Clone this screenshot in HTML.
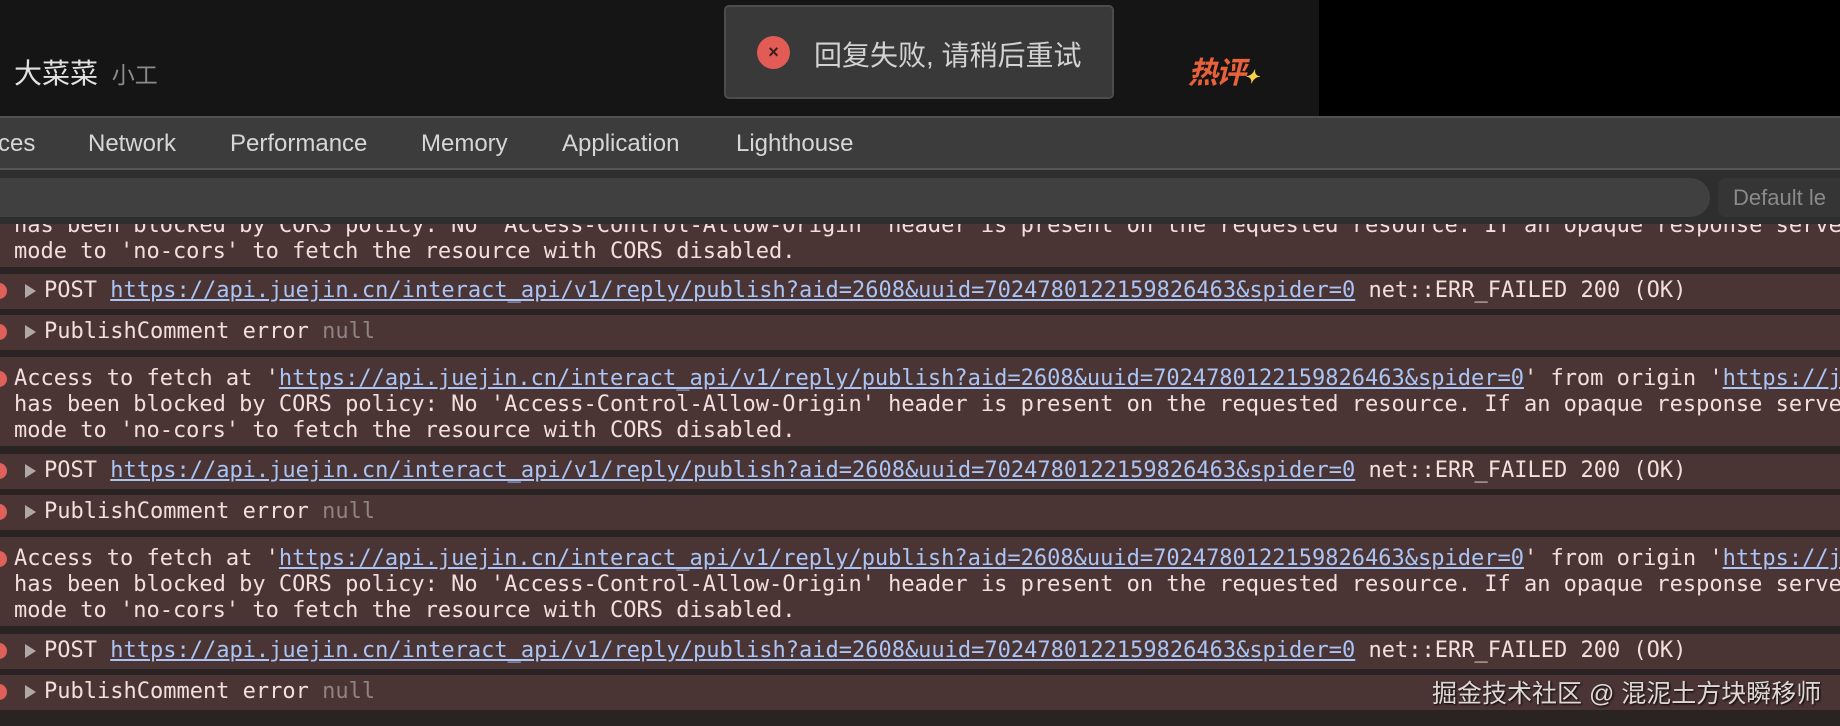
<!DOCTYPE html>
<html><head><meta charset="utf-8"><style>
*{margin:0;padding:0;box-sizing:border-box}
html,body{width:1840px;height:726px;overflow:hidden;background:#292323;position:relative}
.top{position:absolute;left:0;top:0;width:1840px;height:116px;background:#000}
.topd{position:absolute;left:0;top:0;width:1319px;height:116px;background:#151515}
.cn{font-family:"Liberation Sans","Noto Sans CJK SC",sans-serif}
.tabs{position:absolute;left:0;top:116px;width:1840px;height:54px;background:#3c3c3c;border-top:2px solid #505050;border-bottom:2px solid #555}
.tab{position:absolute;top:12px;font:24px "Liberation Sans",sans-serif;color:#d6d6d6}
.filt{position:absolute;left:0;top:170px;width:1840px;height:54px;background:#2e2e2e}
.inp{position:absolute;left:-20px;top:8px;width:1730px;height:39px;background:#404040;border-radius:20px}
.lvl{position:absolute;left:1718px;top:8px;width:140px;height:39px;background:#353535;border-radius:8px;font:22px "Liberation Sans",sans-serif;color:#8a8a8a;padding:7px 0 0 15px}
.con{position:absolute;left:0;top:224px;width:1840px;height:502px;overflow:hidden}
.row{position:absolute;left:0;width:1840px;background:#4a3534;font:22px/26px "DejaVu Sans Mono","Liberation Mono",monospace;color:#f2dfdc;white-space:pre;padding-top:4px;overflow:hidden}
.row.a3{padding-top:9px}
.row a{color:#a9c4f5;text-decoration:underline}
.ic{position:absolute;left:-9px;width:16px;height:16px;border-radius:50%;background:#e0605a}
.ar{display:inline-block;width:0;height:0;border-top:7px solid transparent;border-bottom:7px solid transparent;border-left:11px solid #b0a8a6;margin:0 8px 0 0;vertical-align:-1px}
.n{color:#8e8482}
</style></head><body>
<div class="top"></div><div class="topd"></div>
<div class="cn" style="position:absolute;left:14px;top:52px;font-size:28px;color:#e2e2e2">大菜菜 <span style="font-size:23px;color:#8a8a8a;margin-left:6px">小工</span></div>
<div style="position:absolute;left:724px;top:5px;width:390px;height:94px;background:#393939;border:2px solid #4c4c4c;border-radius:5px"></div>
<div style="position:absolute;left:757px;top:36px;width:33px;height:33px;border-radius:50%;background:#e25b55;color:#3a2020;font:bold 18px 'Liberation Sans',sans-serif;text-align:center;line-height:33px">×</div>
<div class="cn" style="position:absolute;left:814px;top:34px;font-size:28px;color:#d2d2d2">回复失败, 请稍后重试</div>
<div class="cn" style="position:absolute;left:1188px;top:48px;font-size:30px;font-weight:bold;color:#e8613a;font-style:italic;letter-spacing:-2px">热评<span style="color:#f5d04a;font-size:18px">✦</span></div>
<div class="tabs">
<span class="tab" style="left:-2px">ces</span><span class="tab" style="left:88px">Network</span><span class="tab" style="left:230px">Performance</span><span class="tab" style="left:421px">Memory</span><span class="tab" style="left:562px">Application</span><span class="tab" style="left:736px">Lighthouse</span>
</div>
<div class="filt"><div class="inp"></div><div class="lvl">Default le</div></div>
<div class="con">
<div class="row a3" style="top:-46px;height:89px;padding-left:14px">Access to fetch at '<a>https://api.juejin.cn/interact_api/v1/reply/publish?aid=2608&amp;uuid=7024780122159826463&amp;spider=0</a>' from origin '<a>https://juejin.cn</a>'
has been blocked by CORS policy: No 'Access-Control-Allow-Origin' header is present on the requested resource. If an opaque response serves your needs, set the request's
mode to 'no-cors' to fetch the resource with CORS disabled.</div>
<div class="row" style="top:50px;height:35px;padding-left:25px"><i class="ic" style="top:9px"></i><i class="ar"></i>POST <a>https://api.juejin.cn/interact_api/v1/reply/publish?aid=2608&amp;uuid=7024780122159826463&amp;spider=0</a> net::ERR_FAILED 200 (OK)</div>
<div class="row" style="top:91px;height:35px;padding-left:25px"><i class="ic" style="top:9px"></i><i class="ar"></i>PublishComment error <span class="n">null</span></div>
<div class="row a3" style="top:133px;height:89px;padding-left:14px"><i class="ic" style="top:14px"></i>Access to fetch at '<a>https://api.juejin.cn/interact_api/v1/reply/publish?aid=2608&amp;uuid=7024780122159826463&amp;spider=0</a>' from origin '<a>https://juejin.cn</a>'
has been blocked by CORS policy: No 'Access-Control-Allow-Origin' header is present on the requested resource. If an opaque response serves your needs, set the request's
mode to 'no-cors' to fetch the resource with CORS disabled.</div>
<div class="row" style="top:230px;height:35px;padding-left:25px"><i class="ic" style="top:9px"></i><i class="ar"></i>POST <a>https://api.juejin.cn/interact_api/v1/reply/publish?aid=2608&amp;uuid=7024780122159826463&amp;spider=0</a> net::ERR_FAILED 200 (OK)</div>
<div class="row" style="top:271px;height:35px;padding-left:25px"><i class="ic" style="top:9px"></i><i class="ar"></i>PublishComment error <span class="n">null</span></div>
<div class="row a3" style="top:313px;height:89px;padding-left:14px"><i class="ic" style="top:14px"></i>Access to fetch at '<a>https://api.juejin.cn/interact_api/v1/reply/publish?aid=2608&amp;uuid=7024780122159826463&amp;spider=0</a>' from origin '<a>https://juejin.cn</a>'
has been blocked by CORS policy: No 'Access-Control-Allow-Origin' header is present on the requested resource. If an opaque response serves your needs, set the request's
mode to 'no-cors' to fetch the resource with CORS disabled.</div>
<div class="row" style="top:410px;height:35px;padding-left:25px"><i class="ic" style="top:9px"></i><i class="ar"></i>POST <a>https://api.juejin.cn/interact_api/v1/reply/publish?aid=2608&amp;uuid=7024780122159826463&amp;spider=0</a> net::ERR_FAILED 200 (OK)</div>
<div class="row" style="top:451px;height:35px;padding-left:25px"><i class="ic" style="top:9px"></i><i class="ar"></i>PublishComment error <span class="n">null</span></div>
</div>
<div class="cn" style="position:absolute;left:1432px;top:674px;font-size:25px;color:#e0d8d6;text-shadow:1px 1px 2px #000">掘金技术社区 @ 混泥土方块瞬移师</div>
</body></html>
